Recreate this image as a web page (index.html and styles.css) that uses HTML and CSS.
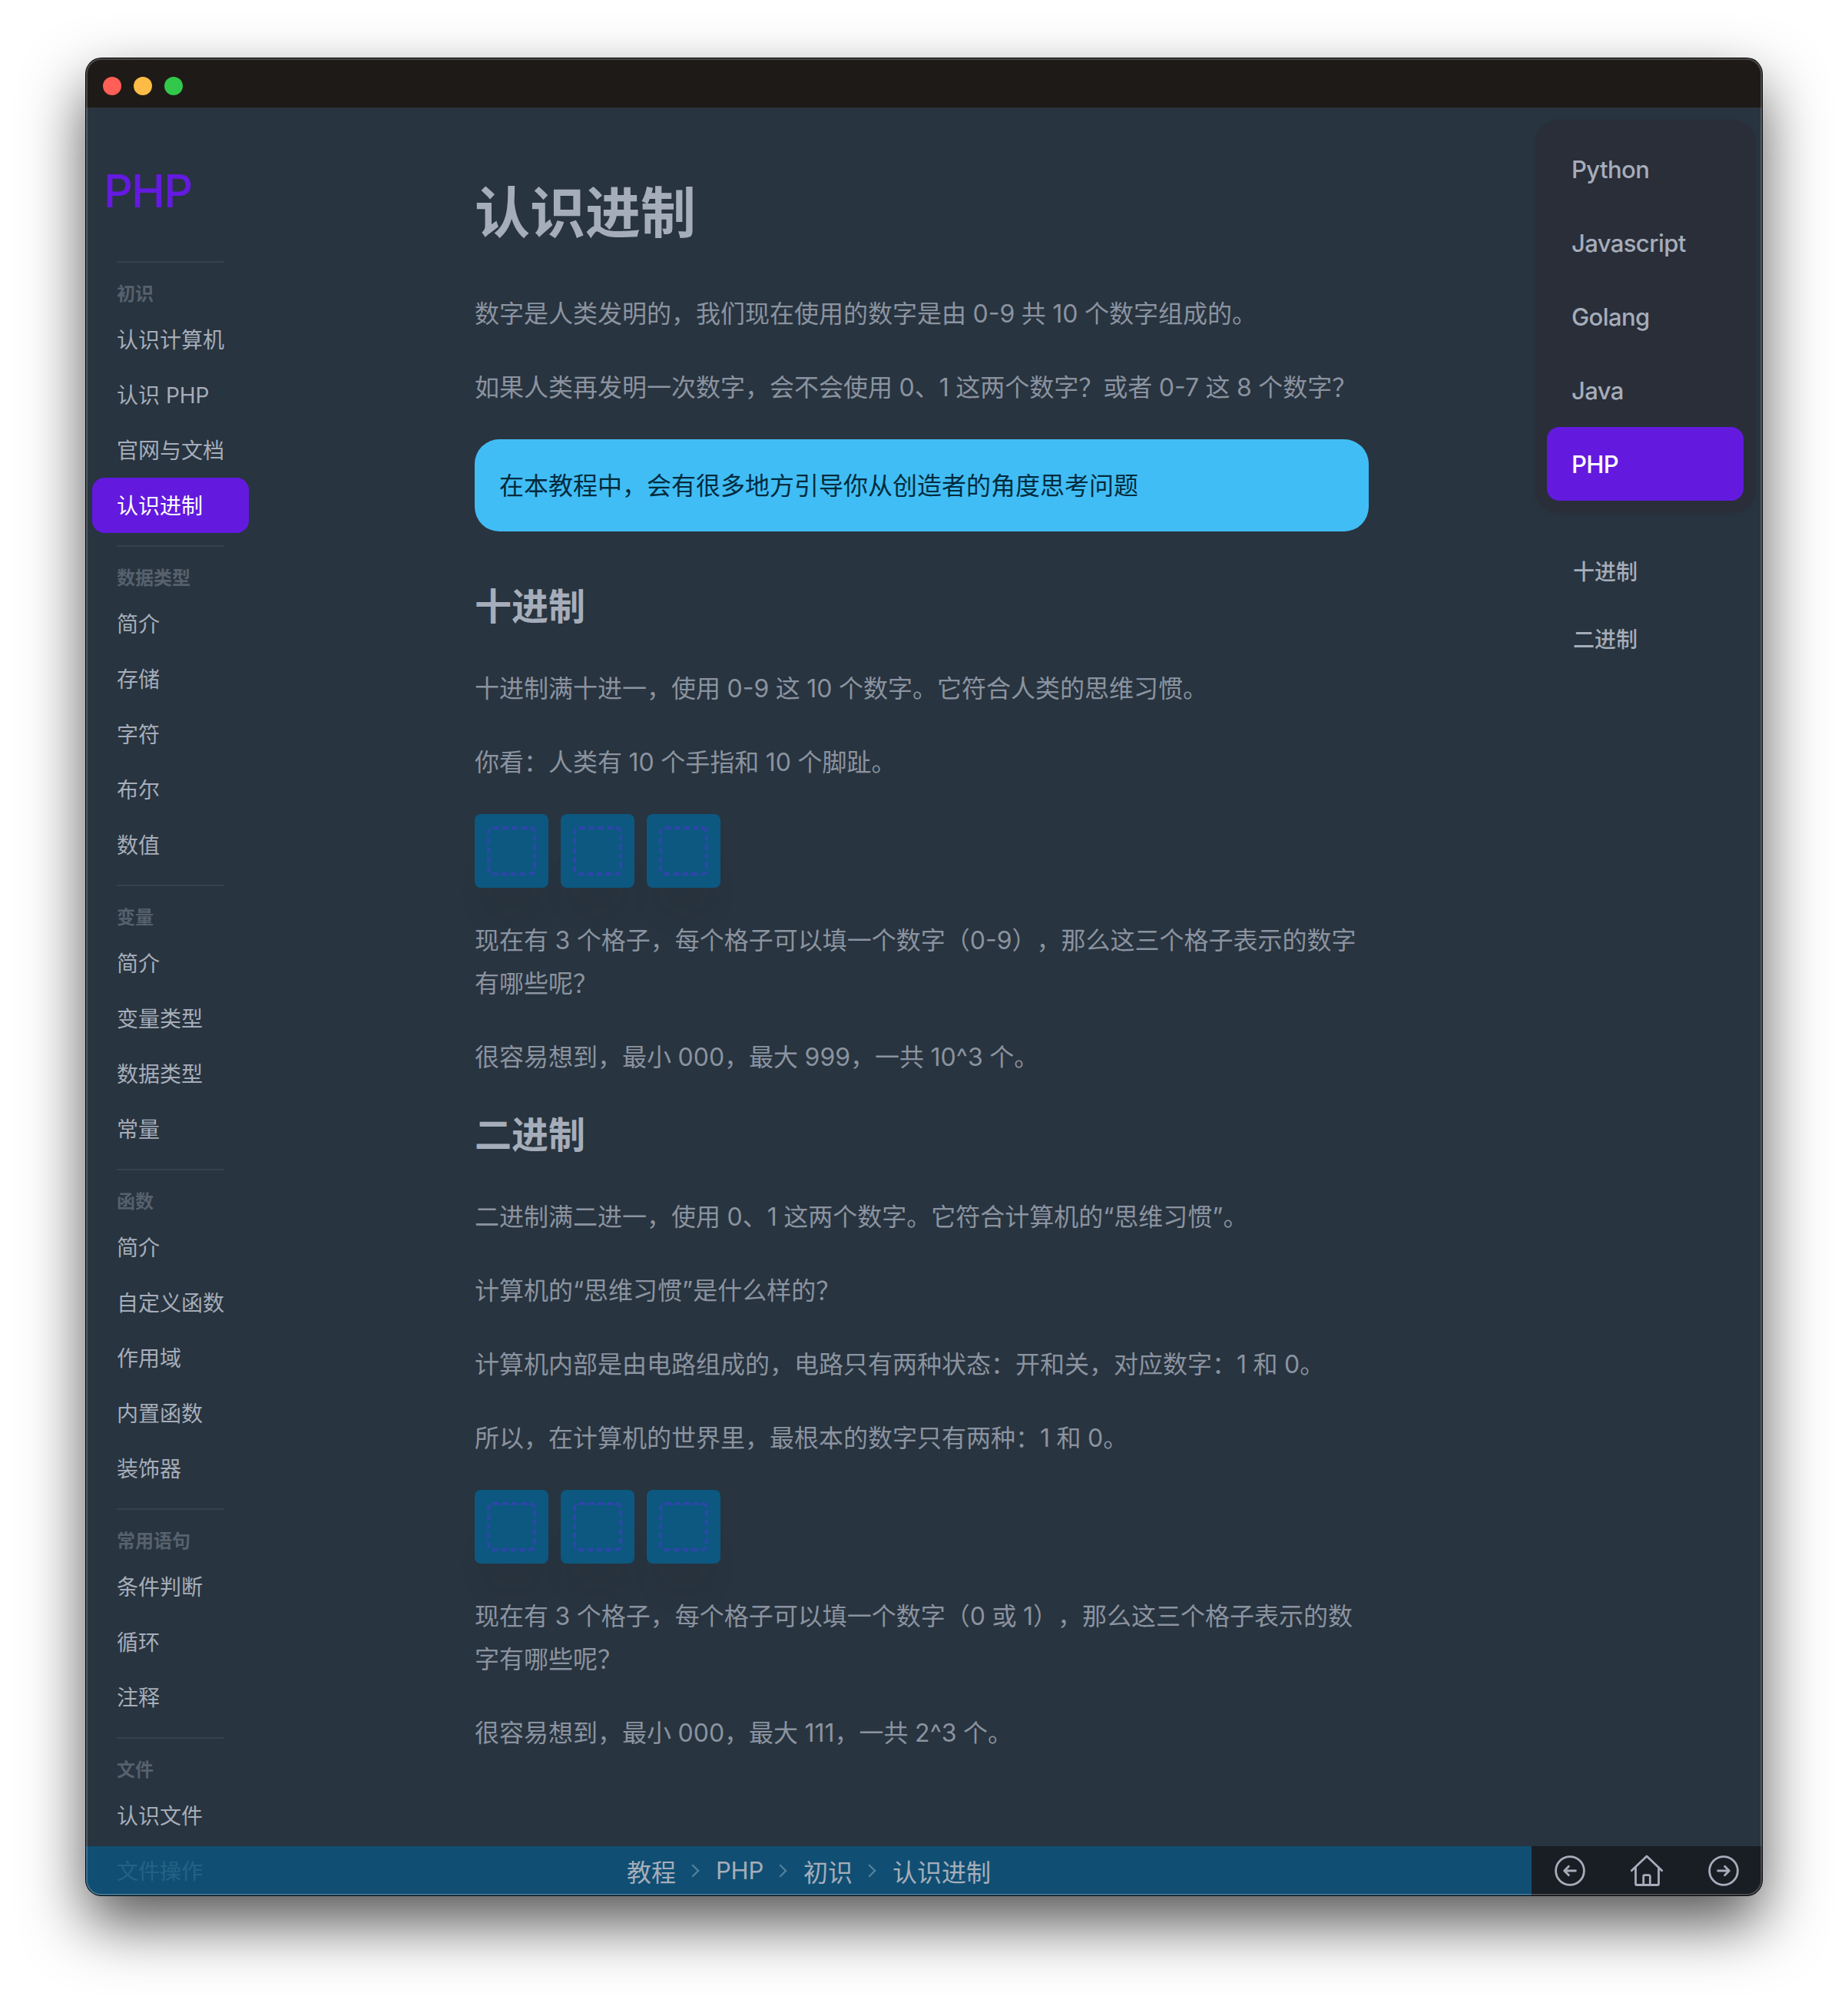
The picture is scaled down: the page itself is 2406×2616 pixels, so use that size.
FILE: index.html
```html
<!DOCTYPE html>
<html lang="zh-CN">
<head>
<meta charset="utf-8">
<title>认识进制</title>
<link rel="stylesheet" href="styles.css">
</head>
<body>
<div class="window">
  <header class="titlebar">
    <span class="light light-close"></span>
    <span class="light light-min"></span>
    <span class="light light-max"></span>
  </header>
  <div class="body">
    <aside class="sidebar">
      <div class="brand">PHP</div>
      <nav class="groups">
        <section class="group"><h3>初识</h3>
          <a>认识计算机</a><a>认识 PHP</a><a>官网与文档</a><a class="active">认识进制</a></section>
        <section class="group"><h3>数据类型</h3>
          <a>简介</a><a>存储</a><a>字符</a><a>布尔</a><a>数值</a></section>
        <section class="group"><h3>变量</h3>
          <a>简介</a><a>变量类型</a><a>数据类型</a><a>常量</a></section>
        <section class="group"><h3>函数</h3>
          <a>简介</a><a>自定义函数</a><a>作用域</a><a>内置函数</a><a>装饰器</a></section>
        <section class="group"><h3>常用语句</h3>
          <a>条件判断</a><a>循环</a><a>注释</a></section>
        <section class="group"><h3>文件</h3>
          <a>认识文件</a><a>文件操作</a></section>
      </nav>
    </aside>
    <main class="article">
      <h1>认识进制</h1>
      <p>数字是人类发明的，我们现在使用的数字是由 0-9 共 10 个数字组成的。</p>
      <p>如果人类再发明一次数字，会不会使用 0、1 这两个数字？或者 0-7 这 8 个数字？</p>
      <div class="alert">在本教程中，会有很多地方引导你从创造者的角度思考问题</div>
      <h2>十进制</h2>
      <p>十进制满十进一，使用 0-9 这 10 个数字。它符合人类的思维习惯。</p>
      <p>你看：人类有 10 个手指和 10 个脚趾。</p>
      <div class="cells"><div class="cell"><i></i></div><div class="cell"><i></i></div><div class="cell"><i></i></div></div>
      <p>现在有 3 个格子，每个格子可以填一个数字（0-9），那么这三个格子表示的数字<br>有哪些呢？</p>
      <p>很容易想到，最小 000，最大 999，一共 10^3 个。</p>
      <h2 class="tight">二进制</h2>
      <p>二进制满二进一，使用 0、1 这两个数字。它符合计算机的“思维习惯”。</p>
      <p>计算机的“思维习惯”是什么样的？</p>
      <p>计算机内部是由电路组成的，电路只有两种状态：开和关，对应数字：1 和 0。</p>
      <p>所以，在计算机的世界里，最根本的数字只有两种：1 和 0。</p>
      <div class="cells"><div class="cell"><i></i></div><div class="cell"><i></i></div><div class="cell"><i></i></div></div>
      <p>现在有 3 个格子，每个格子可以填一个数字（0 或 1），那么这三个格子表示的数<br>字有哪些呢？</p>
      <p>很容易想到，最小 000，最大 111，一共 2^3 个。</p>
    </main>
    <aside class="right">
      <nav class="langs">
        <a>Python</a><a>Javascript</a><a>Golang</a><a>Java</a><a class="active">PHP</a>
      </nav>
      <nav class="toc"><a>十进制</a><a>二进制</a></nav>
    </aside>
  </div>
  <footer class="footer">
    <div class="crumbs"><span>教程</span><span class="latin">PHP</span><span>初识</span><span>认识进制</span></div>
    <div class="actions">
      <svg viewBox="0 0 48 48"><circle cx="24" cy="24" r="18.4"/><path d="M31.4 24H16.800M22.400 18.200 16.700 24l5.700 5.800"/></svg>
      <svg viewBox="0 0 48 48"><path d="M4.300 23.800 24 4.900l19.700 18.900M9.500 20v21a1.500 1.500 0 0 0 1.500 1.500h27a1.500 1.500 0 0 0 1.500-1.500V20M19.700 42.500V31.200a1.500 1.500 0 0 1 1.500-1.500h5.600a1.500 1.500 0 0 1 1.500 1.500V42.500"/></svg>
      <svg viewBox="0 0 48 48"><circle cx="24" cy="24" r="18.4"/><path d="M16.600 24h14.600M25.600 18.200l5.700 5.800-5.700 5.800"/></svg>
    </div>
  </footer>
</div>
</body>
</html>
```
FILE: styles.css
```css
*, *::before, *::after { box-sizing: border-box; margin: 0; }
body {
  height: 2616px;
  padding: 76px 112px 148px;
  background: #fff;
  overflow: hidden;
  font-family: Inter, "Noto Sans CJK SC", sans-serif;
  text-spacing-trim: space-all;
  color: #a6adba;
}
.window {
  position: relative;
  display: flex;
  flex-direction: column;
  height: 2392px;
  border-radius: 20px;
  background: #28343f;
  box-shadow: 0 0 0 1px #000, 0 36px 80px rgba(0, 0, 0, .67);
}
/* inner highlight drawn over the window's content */
.window::after {
  content: "";
  position: absolute;
  inset: 0;
  border: 2px solid rgba(255, 255, 255, .2);
  border-radius: 20px;
}
.titlebar {
  display: flex;
  align-items: center;
  gap: 16px;
  height: 64px;
  padding: 8px 22px 0;
  flex: none;
  background: #1e1a17;
  border-radius: 20px 20px 0 0;
}
.light { width: 24px; height: 24px; border-radius: 50%; }
.light-close { background: #ff5f57; }
.light-min { background: #febb45; }
.light-max { background: #32c84c; }

.body { display: flex; height: 2264px; flex: none; }
.sidebar { width: 220px; padding: 0 8px; flex: none; }
.brand {
  height: 200px;
  padding: 63px 0 0 15px;
  font-size: 59px;
  line-height: 92px;
  font-weight: 450;
  letter-spacing: -1.8px;
  color: #641ae0;
}
.group { width: 204px; margin-bottom: 16px; }
.group::before {
  content: "";
  display: block;
  height: 2px;
  margin: 0 32px;
  background: #36414d;
}
.group h3 {
  height: 64px;
  padding: 8px 32px 0;
  font-size: 24px;
  line-height: 66px;
  font-weight: 700;
  color: #56616d;
}
.group a {
  display: block;
  height: 72px;
  padding: 0 32px;
  border-radius: 16px;
  font-size: 28px;
  line-height: 74px;
  white-space: nowrap;
}
.group .active, .langs .active { background: #631ade; color: #fff; }

.article {
  width: 1164px;
  margin-left: 286px;
  padding-top: 97px;
  flex: none;
  font-size: 32px;
  line-height: 56px;
}
.article p {
  padding-top: 1px;
  margin-bottom: 39px;
  color: #8b93a0;
  white-space: nowrap;
  word-spacing: -.5px;
}
h1 { font-size: 72px; line-height: 80px; margin-bottom: 63px; font-weight: 700; }
h2 { font-size: 48px; line-height: 64px; margin: 66px 0 46px; font-weight: 700; }
h2.tight { margin-top: 41px; }
.alert {
  height: 120px;
  padding: 0 32px;
  border-radius: 32px;
  line-height: 122px;
  background: #41bdf5;
  color: #002b3d;
}
.cells { display: flex; gap: 16px; margin-bottom: 40px; }
.cell {
  width: 96px;
  height: 96px;
  padding: 16px;
  border-radius: 8px;
  background: #0c5880;
  box-shadow: 0 50px 50px -24px rgba(30, 35, 45, .12);
}
.cell i { display: block; height: 64px; border: 4px dashed #2e46aa; border-radius: 8px; }

.right { width: 288px; margin: 16px 8px 0 auto; }
.langs {
  padding: 16px;
  border-radius: 32px;
  background: #292e39;
  box-shadow: 0 1px 4px rgba(41, 46, 57, .3);
}
.langs a {
  display: block;
  height: 96px;
  padding: 0 32px;
  border-radius: 16px;
  font-size: 31px;
  line-height: 98px;
  font-weight: 450;
  letter-spacing: -.6px;
}
.toc { padding: 32px 50px; }
.toc a { display: block; height: 88px; font-size: 28px; line-height: 91px; font-weight: 500; }

.footer {
  display: flex;
  height: 64px;
  border-radius: 0 0 20px 20px;
  overflow: hidden;
  margin-top: auto;
}
.crumbs {
  display: flex;
  align-items: center;
  width: 1882px;
  padding: 0 0 1px 704px;
  background: rgba(12, 85, 125, .85);
  font-size: 32px;
}
.crumbs span { display: flex; align-items: center; white-space: nowrap; }
.crumbs .latin { font-size: 31px; letter-spacing: -.2px; }
.crumbs span + span::before {
  content: "";
  width: 12px;
  height: 12px;
  margin: 0 24px 0 16px;
  border: solid #5584a0;
  border-width: 2px 2px 0 0;
  transform: rotate(45deg);
}
.actions { display: flex; flex: 1; background: #191d24; }
.actions svg {
  width: 48px;
  height: 48px;
  margin: 8px 26px;
  fill: none;
  stroke: #a6adba;
  stroke-width: 2.8;
  stroke-linecap: round;
  stroke-linejoin: round;
}
```
